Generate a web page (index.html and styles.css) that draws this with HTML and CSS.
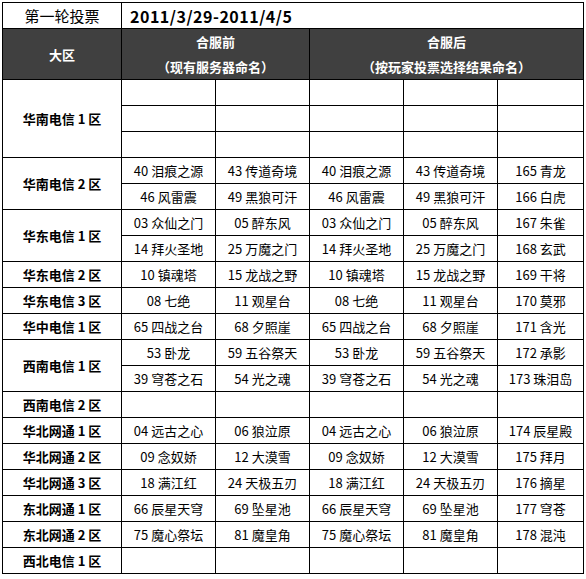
FILE: index.html
```html
<!DOCTYPE html>
<html lang="zh-CN">
<head>
<meta charset="utf-8">
<title>第一轮投票</title>
<link rel="stylesheet" href="styles.css">
</head>
<body>
<table class="vote">
  <colgroup>
    <col class="c-area">
    <col class="c-srv">
    <col class="c-srv">
    <col class="c-srv">
    <col class="c-srv">
    <col class="c-new">
  </colgroup>
  <tr class="title-row">
    <td class="title">第一轮投票</td>
    <td class="date" colspan="5">2011/3/29-2011/4/5</td>
  </tr>
  <tr class="head-row">
    <th>大区</th>
    <th colspan="2">合服前<br>（现有服务器命名）</th>
    <th colspan="3">合服后<br>（按玩家投票选择结果命名）</th>
  </tr>
  <tr><td class="area" rowspan="3">华南电信 1 区</td><td></td><td></td><td></td><td></td><td></td></tr>
  <tr><td></td><td></td><td></td><td></td><td></td></tr>
  <tr><td></td><td></td><td></td><td></td><td></td></tr>

  <tr><td class="area" rowspan="2">华南电信 2 区</td><td>40 泪痕之源</td><td>43 传道奇境</td><td>40 泪痕之源</td><td>43 传道奇境</td><td>165 青龙</td></tr>
  <tr><td>46 风雷震</td><td>49 黑狼可汗</td><td>46 风雷震</td><td>49 黑狼可汗</td><td>166 白虎</td></tr>

  <tr><td class="area" rowspan="2">华东电信 1 区</td><td>03 众仙之门</td><td>05 醉东风</td><td>03 众仙之门</td><td>05 醉东风</td><td>167 朱雀</td></tr>
  <tr><td>14 拜火圣地</td><td>25 万魔之门</td><td>14 拜火圣地</td><td>25 万魔之门</td><td>168 玄武</td></tr>

  <tr><td class="area">华东电信 2 区</td><td>10 镇魂塔</td><td>15 龙战之野</td><td>10 镇魂塔</td><td>15 龙战之野</td><td>169 干将</td></tr>
  <tr><td class="area">华东电信 3 区</td><td>08 七绝</td><td>11 观星台</td><td>08 七绝</td><td>11 观星台</td><td>170 莫邪</td></tr>
  <tr><td class="area">华中电信 1 区</td><td>65 四战之台</td><td>68 夕照崖</td><td>65 四战之台</td><td>68 夕照崖</td><td>171 含光</td></tr>

  <tr><td class="area" rowspan="2">西南电信 1 区</td><td>53 卧龙</td><td>59 五谷祭天</td><td>53 卧龙</td><td>59 五谷祭天</td><td>172 承影</td></tr>
  <tr><td>39 穹苍之石</td><td>54 光之魂</td><td>39 穹苍之石</td><td>54 光之魂</td><td>173 珠泪岛</td></tr>

  <tr><td class="area">西南电信 2 区</td><td></td><td></td><td></td><td></td><td></td></tr>
  <tr><td class="area">华北网通 1 区</td><td>04 远古之心</td><td>06 狼泣原</td><td>04 远古之心</td><td>06 狼泣原</td><td>174 辰星殿</td></tr>
  <tr><td class="area">华北网通 2 区</td><td>09 念奴娇</td><td>12 大漠雪</td><td>09 念奴娇</td><td>12 大漠雪</td><td>175 拜月</td></tr>
  <tr><td class="area">华北网通 3 区</td><td>18 满江红</td><td>24 天极五刃</td><td>18 满江红</td><td>24 天极五刃</td><td>176 摘星</td></tr>
  <tr><td class="area">东北网通 1 区</td><td>66 辰星天穹</td><td>69 坠星池</td><td>66 辰星天穹</td><td>69 坠星池</td><td>177 穹苍</td></tr>
  <tr><td class="area">东北网通 2 区</td><td>75 魔心祭坛</td><td>81 魔皇角</td><td>75 魔心祭坛</td><td>81 魔皇角</td><td>178 混沌</td></tr>
  <tr><td class="area">西北电信 1 区</td><td></td><td></td><td></td><td></td><td></td></tr>
</table>
</body>
</html>
```

FILE: styles.css
```css
html, body {
  margin: 0;
  padding: 0;
  background: #fff;
}
body {
  padding: 2px;
  font-family: "Noto Sans CJK SC", "Noto Sans", sans-serif;
  color: #000;
}
.vote {
  border-collapse: collapse;
  table-layout: fixed;
  width: 581px;
}
.c-area { width: 119px; }
.c-srv { width: 94px; }
.c-new { width: 86px; }
.vote td, .vote th {
  border: 1px solid #000;
  padding: 0;
  text-align: center;
  vertical-align: middle;
  font-size: 13px;
  line-height: 16px;
  white-space: nowrap;
  overflow: hidden;
}
.vote tr { height: 26px; }
.title-row td { height: 25px; }
.title {
  font-size: 15px !important;
}
.date {
  text-align: left !important;
  padding-left: 8px !important;
  font-size: 16px !important;
  letter-spacing: 0.5px;
  font-weight: bold;
}
.head-row th {
  background: #404040;
  color: #fff;
  font-weight: bold;
  line-height: 25px;
  height: 50px;
}
.vote td.area {
  font-weight: bold;
}
```
